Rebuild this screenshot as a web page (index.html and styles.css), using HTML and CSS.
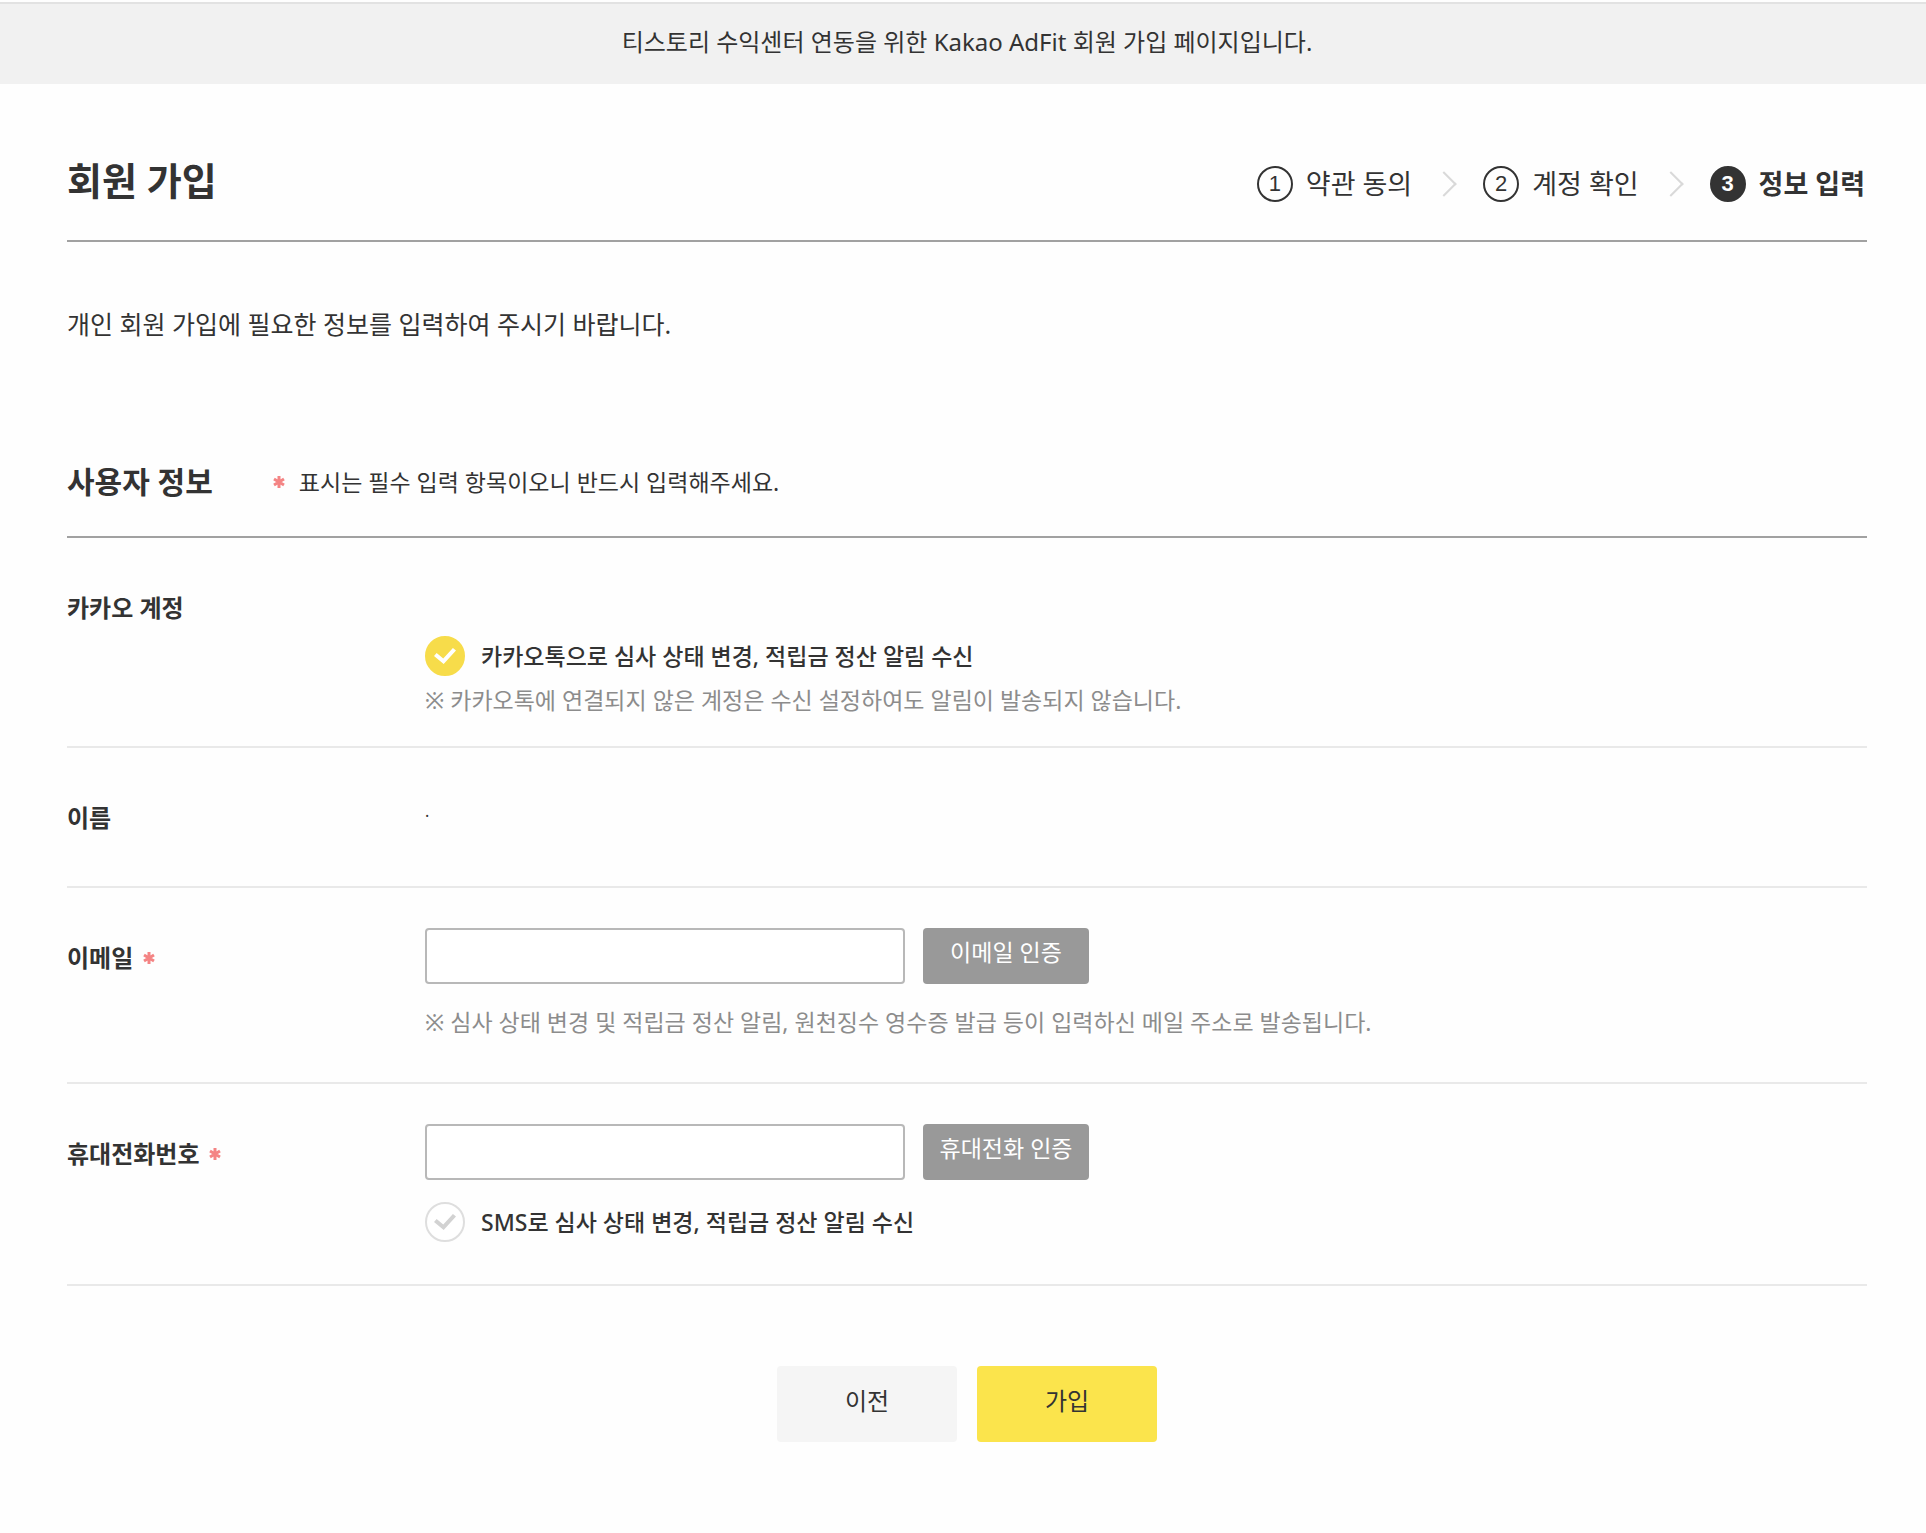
FILE: index.html
```html
<!DOCTYPE html>
<html lang="ko">
<head>
    <meta charset="UTF-8">
    <meta name="viewport" content="width=device-width, initial-scale=1.0">
    <title>회원 가입 - Kakao AdFit</title>
    <link rel="stylesheet" href="styles.css">
</head>
<body>
    <!-- Top notice -->
    <p class="notice">티스토리 수익센터 연동을 위한 Kakao AdFit 회원 가입 페이지입니다.</p>

    <main class="container">
        <header class="page-head">
            <h1>회원 가입</h1>
            <ol class="steps">
                <li class="step"><span class="step-num">1</span>약관 동의</li>
                <li class="step"><span class="step-num">2</span>계정 확인</li>
                <li class="step current"><span class="step-num">3</span>정보 입력</li>
            </ol>
        </header>

        <p class="intro">개인 회원 가입에 필요한 정보를 입력하여 주시기 바랍니다.</p>

        <form>
            <div class="section-head">
                <h2>사용자 정보</h2>
                <p class="guide">
                    <svg class="star" viewBox="0 0 12 14"><path d="M6 1v12M1 4l10 6M11 4L1 10"/></svg>
                    표시는 필수 입력 항목이오니 반드시 입력해주세요.
                </p>
            </div>

            <div class="row row-account">
                <span class="row-label">카카오 계정</span>
                <div class="row-body">
                    <label class="check"><input type="checkbox" checked>카카오톡으로 심사 상태 변경, 적립금 정산 알림 수신</label>
                    <p class="desc">※ 카카오톡에 연결되지 않은 계정은 수신 설정하여도 알림이 발송되지 않습니다.</p>
                </div>
            </div>

            <div class="row row-name">
                <span class="row-label">이름</span>
                <div class="row-body"><p class="name">·</p></div>
            </div>

            <div class="row row-email">
                <label class="row-label" for="email">이메일
                    <svg class="star" viewBox="0 0 12 14"><path d="M6 1v12M1 4l10 6M11 4L1 10"/></svg>
                </label>
                <div class="row-body">
                    <div class="field">
                        <input type="text" id="email" class="text-input">
                        <button type="button" class="btn-verify">이메일 인증</button>
                    </div>
                    <p class="desc">※ 심사 상태 변경 및 적립금 정산 알림, 원천징수 영수증 발급 등이 입력하신 메일 주소로 발송됩니다.</p>
                </div>
            </div>

            <div class="row row-phone">
                <label class="row-label" for="phone">휴대전화번호
                    <svg class="star" viewBox="0 0 12 14"><path d="M6 1v12M1 4l10 6M11 4L1 10"/></svg>
                </label>
                <div class="row-body">
                    <div class="field">
                        <input type="tel" id="phone" class="text-input">
                        <button type="button" class="btn-verify">휴대전화 인증</button>
                    </div>
                    <label class="check"><input type="checkbox">SMS로 심사 상태 변경, 적립금 정산 알림 수신</label>
                </div>
            </div>

            <div class="actions">
                <button type="button" class="btn">이전</button>
                <button type="submit" class="btn btn-primary">가입</button>
            </div>
        </form>
    </main>
</body>
</html>
```

FILE: styles.css
```css
:root {
    --text: #333;
    --text-gray: #8c8c8c;
    --line-dark: #a1a1a1;
    --line: #e9e9e9;
    --yellow: #fbe44c;
    --red: #f48484;
}

* {
    margin: 0;
    padding: 0;
    box-sizing: border-box;
}

body {
    background: #fefefe;
    color: var(--text);
    font-family: "Noto Sans", "Noto Sans CJK KR", sans-serif;
    font-size: 24px;
    line-height: 36px;
}

button,
input {
    font: inherit;
    color: inherit;
}

button {
    border: none;
    cursor: pointer;
}

/* Top notice */
.notice {
    margin-top: 2px;
    padding: 20px 59px 24px 67px;
    border-top: 2px solid #e2e2e2;
    background: #f1f1f1;
    text-align: center;
}

.container {
    padding: 66px 59px 90px 67px;
}

/* Page title and steps */
.page-head {
    display: flex;
    justify-content: space-between;
    align-items: center;
    height: 92px;
    padding-bottom: 30px;
    border-bottom: 2px solid var(--line-dark);
}

h1 {
    font-size: 38px;
    line-height: 60px;
}

.steps {
    display: flex;
    padding: 8px 2px 0 0;
    list-style: none;
    font-size: 27px;
}

.step {
    display: flex;
    align-items: center;
    gap: 13px;
}

.step:not(:last-child)::after {
    content: "";
    width: 16px;
    height: 16px;
    margin: 0 30px 0 10px;
    border-top: 2px solid #d9d9d9;
    border-right: 2px solid #d9d9d9;
    transform: rotate(45deg);
}

.step-num {
    width: 36px;
    height: 36px;
    border: 2px solid var(--text);
    border-radius: 50%;
    font-family: "Liberation Sans", sans-serif;
    font-size: 22px;
    line-height: 32px;
    text-align: center;
}

.current {
    font-weight: 700;
}

.current .step-num {
    background: var(--text);
    color: #fff;
}

.intro {
    padding: 64px 0 110px;
    font-size: 25px;
}

/* Section title */
.section-head {
    display: flex;
    align-items: center;
    gap: 60px;
    height: 86px;
    padding-bottom: 24px;
    border-bottom: 2px solid var(--line-dark);
}

h2 {
    font-size: 30px;
}

.guide {
    display: flex;
    align-items: center;
    gap: 14px;
    font-size: 23px;
}

.star {
    width: 12px;
    height: 14px;
    fill: none;
    stroke: var(--red);
    stroke-width: 3;
}

/* Form rows */
.row {
    display: grid;
    grid-template-columns: 358px 1fr;
    border-bottom: 2px solid var(--line);
}

.row-label {
    display: flex;
    align-items: center;
    gap: 10px;
    height: 36px;
    font-weight: 700;
}

.row-account {
    padding: 52px 0 28px;
}

.row-account .row-body {
    padding-top: 46px;
}

.row-name {
    padding: 52px 0 50px;
}

.name {
    font-size: 16px;
    line-height: 32px;
}

.row-email,
.row-phone {
    padding: 40px 0 42px;
}

.row-email .row-label,
.row-phone .row-label {
    margin-top: 12px;
}

.field {
    display: flex;
    gap: 18px;
}

.text-input {
    width: 480px;
    height: 56px;
    padding: 0 16px;
    border: 2px solid #b8b8b8;
    border-radius: 4px;
    background: #fff;
}

.btn-verify {
    width: 166px;
    height: 56px;
    padding-bottom: 8px;
    border-radius: 4px;
    background: #999;
    color: #fff;
    font-size: 23px;
}

.desc {
    color: var(--text-gray);
    font-size: 23px;
}

.row-account .desc {
    margin-top: 6px;
}

.row-email .desc {
    margin-top: 20px;
}

.check {
    display: flex;
    align-items: center;
    gap: 16px;
    width: fit-content;
    font-size: 23px;
    font-weight: 500;
    cursor: pointer;
}

.row-phone .check {
    margin-top: 22px;
}

.check input {
    appearance: none;
    display: grid;
    place-items: center;
    width: 40px;
    height: 40px;
    border: 2px solid #dedede;
    border-radius: 50%;
    background: #fff;
}

.check input::before {
    content: "";
    width: 22px;
    height: 16px;
    background: #d2d2d2;
    clip-path: polygon(0 50%, 12% 32%, 42% 66%, 86% 0, 100% 16%, 44% 100%);
}

.check input:checked {
    border-color: #f7dc4a;
    background: #f7dc4a;
}

.check input:checked::before {
    background: #fff;
}

/* Bottom buttons */
.actions {
    display: flex;
    justify-content: center;
    gap: 20px;
    margin-top: 80px;
}

.btn {
    width: 180px;
    height: 76px;
    padding-bottom: 6px;
    border-radius: 4px;
    background: #f5f5f5;
}

.btn-primary {
    background: var(--yellow);
}
```
